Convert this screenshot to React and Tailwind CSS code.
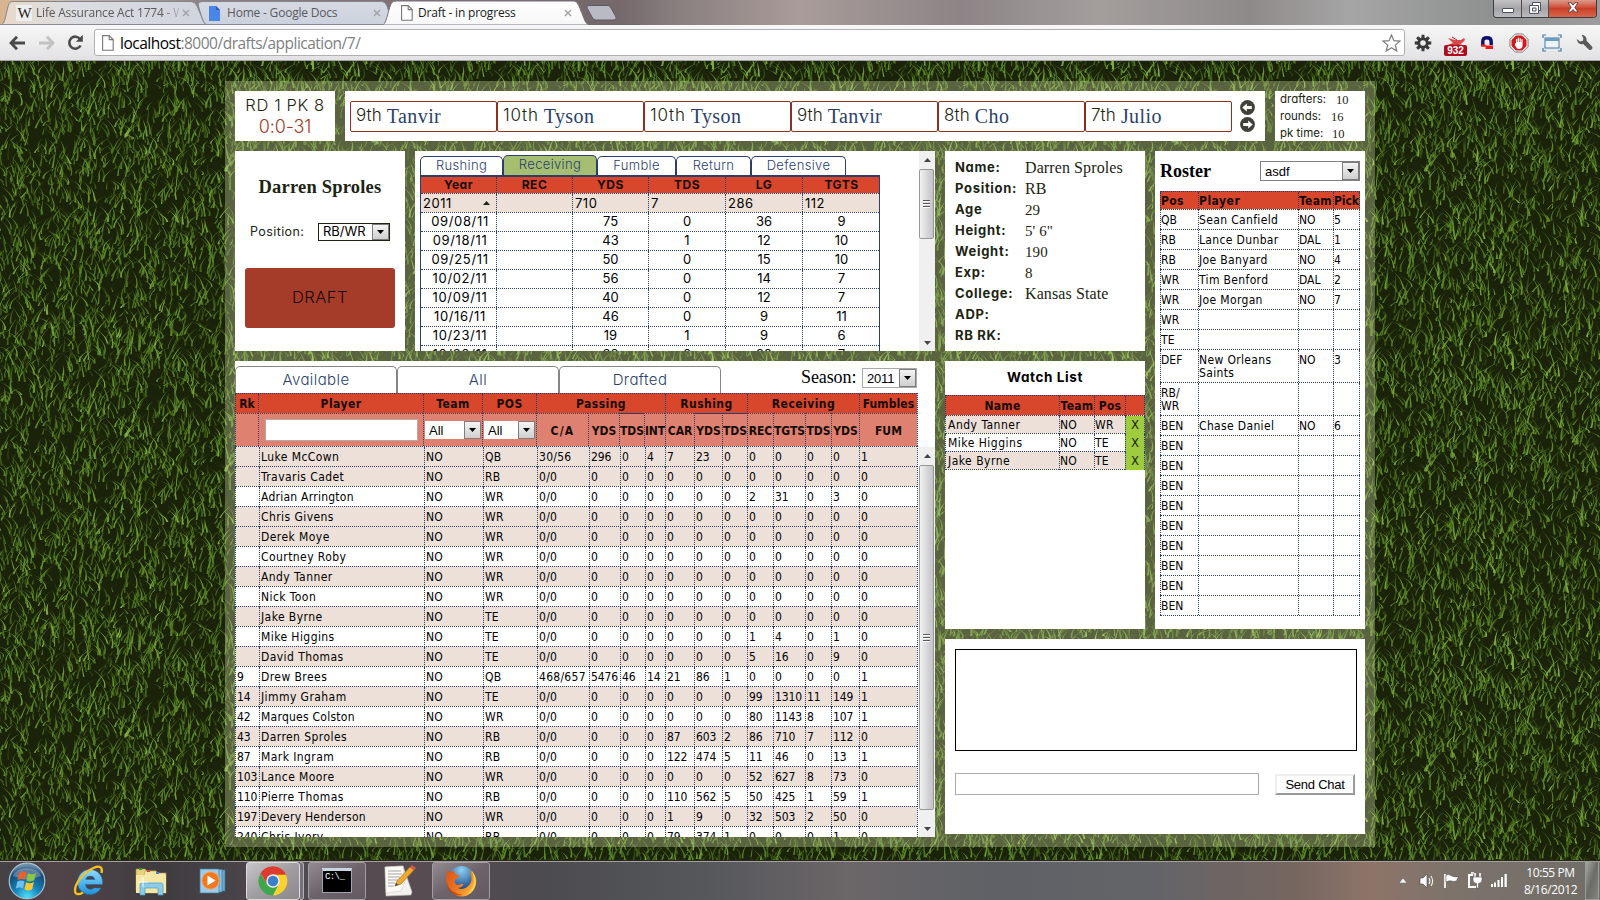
import React from "react";

const UI = "font-['DejaVu_Sans_Condensed','DejaVu_Sans',sans-serif] [font-stretch:condensed]";
const GEO = "font-['Inter',sans-serif] [font-feature-settings:'cv11']";
const SERIF = "font-['Liberation_Serif',serif]";
const SEGOE = "font-['Open_Sans','Noto_Sans',sans-serif]";
const LINE = "border-dotted border-[#2b3f6c]";

/* ---------- grass backdrop ---------- */
function makeBlades() {
  let s = 7;
  const rnd = () => {
    s = (s * 16807) % 2147483647;
    return s / 2147483647;
  };
  const colors = ["#2b400f", "#375312", "#446519", "#4f7721", "#5d8829", "#6d9a34", "#7fab42"];
  const W = 400;
  const H = 300;
  const N = 3700;
  const out = [];
  for (let i = 0; i < N; i++) {
    const x = rnd() * W;
    const y = rnd() * H;
    const a = (rnd() - 0.5) * 2;
    const lean = a * 13 + (rnd() - 0.5) * 3;
    const len = 5 + rnd() * 14;
    const bend = (rnd() - 0.5) * 6;
    const k = Math.min(6, Math.floor((i / N) * 3.800 + rnd() * 3));
    const w = 0.5 + rnd() * 0.6;
    const f = (n) => n.toFixed(1);
    for (const dx of [0, x < 24 ? W : x > W - 24 ? -W : null]) {
      if (dx === null) continue;
      for (const dy of [0, y < 24 ? H : null]) {
        if (dy === null) continue;
        const X = x + dx;
        const Y = y + dy;
        out.push(
          <path
            key={out.length}
            d={`M${f(X - w)} ${f(Y)}Q${f(X + bend)} ${f(Y - len / 2)} ${f(X + lean)} ${f(Y - len)}Q${f(X + bend + w * 1.4)} ${f(Y - len / 2)} ${f(X + w)} ${f(Y)}Z`}
            fill={colors[k]}
          />
        );
      }
    }
  }
  return out;
}
const BLADES = makeBlades();

function Grass() {
  return (
    <svg className="absolute inset-0 h-full w-full" aria-hidden="true">
      <defs>
        <pattern id="grass" width="400" height="300" patternUnits="userSpaceOnUse">
          <rect width="400" height="300" fill="#1a230a" />
          {BLADES}
        </pattern>
      </defs>
      <rect width="100%" height="100%" fill="url(#grass)" />
    </svg>
  );
}

/* ---------- browser chrome ---------- */
function PageIcon({ c = "#777" }) {
  return (
    <svg width="12" height="16" viewBox="0 0 12 16" className="shrink-0">
      <path d="M.6.6h6.6l4 4v10.6H.6z" fill="#fff" stroke={c} strokeWidth="1.1" />
      <path d="M7.2.6v4h4" fill="none" stroke={c} strokeWidth="1.1" />
    </svg>
  );
}
function TabClose({ c = "#a4a4a8" }) {
  return (
    <svg width="8" height="8" viewBox="0 0 8 8" className="shrink-0">
      <path d="M1 1l6 6M7 1L1 7" stroke={c} strokeWidth="1.5" />
    </svg>
  );
}
function BrowserTabs() {
  return (
    <div className="relative h-[25px] w-full bg-[linear-gradient(90deg,#d9b48e_0px,#c9bdb6_60px,#8f8386_200px,#7b6c70_450px,#74686b_620px,#8b8080_680px,#a99c9a_800px,#8c8486_960px,#a39e9c_1100px,#8e8a89_1250px,#a5a5a5_1350px,#8f9090_1490px,#9c9c9c_1600px)]">
      <svg className="absolute left-0 top-0" width="640" height="25" viewBox="0 0 640 25">
        <defs>
          <linearGradient id="tabA" x2="0" y2="1">
            <stop offset="0" stopColor="#d5d9e2" />
            <stop offset="1" stopColor="#ccd2dd" />
          </linearGradient>
          <linearGradient id="tabW" x1="0" x2="1" y2="0">
            <stop offset="0" stopColor="#e8d9ca" />
            <stop offset=".35" stopColor="#dcdde2" />
            <stop offset="1" stopColor="#d0d4dd" />
          </linearGradient>
          <linearGradient id="tabC" x2="0" y2="1">
            <stop offset="0" stopColor="#fff" />
            <stop offset="1" stopColor="#f7f7f7" />
          </linearGradient>
        </defs>
        <path d="M2 24.500C6 23 7 4 10 2.500Q11 1.500 13 1.500H191Q195 1.500 197 6L203 20Q204 24 207 24.500Z" fill="url(#tabW)" stroke="#85858c" />
        <path d="M206 24.500C203 24 199 8 198 4Q199 1.500 202 1.500H382Q385 1.500 387 6L393 24.500Z" fill="url(#tabA)" stroke="#85858c" />
        <path d="M383 25C387 23 389 5 392 2.500Q393 1 396 1H574Q577 1 579 6L585 21Q586 24 590 25Z" fill="url(#tabC)" stroke="#77737a" />
        <path d="M589 5.500H608Q610 5.500 611 8L616 17Q617 20 614 20H596Q593 20 592 17L587 8Q586 5.500 589 5.500Z" fill="#b9bac4" stroke="#5f5a60" />
        <rect x="0" y="24" width="384" height="1" fill="#8a8a90" />
        <rect x="588" y="24" width="52" height="1" fill="#6e6a6e" />
      </svg>
      <div className={`relative flex h-[25px] w-[585px] pt-[1px] text-[12px] tracking-[-0.2px] text-[#5a5a5c] ${SEGOE}`}>
        <div className="flex w-[200px] items-center pl-[16px]">
          <span className={`flex h-[16px] w-[16px] items-center justify-center bg-[#efeeee] text-[15px] tracking-[-1px] text-[#222] ${SERIF}`}>W</span>
          <span className="ml-[4px] w-[143px] whitespace-nowrap [mask-image:linear-gradient(90deg,#000_88%,transparent_104%)]">Life Assurance Act 1774 - W</span>
          <span className="ml-[3px]"><TabClose /></span>
        </div>
        <div className="flex w-[190px] items-center pl-[9px]">
          <svg width="11" height="15" viewBox="0 0 11 15"><path d="M0 0h7l4 4v11H0z" fill="#4a86e8" /><path d="M7 0v4h4z" fill="#2f5fb5" /></svg>
          <span className="ml-[7px] w-[146px]">Home - Google Docs</span>
          <TabClose />
        </div>
        <div className="flex items-center pl-[11px] text-[#1a1a1a]">
          <PageIcon />
          <span className="ml-[5px] w-[146px]">Draft - in progress</span>
          <TabClose />
        </div>
      </div>
      <div className="absolute right-[3px] top-0 flex h-[18px] w-[104px] overflow-hidden rounded-b-[4px] border border-t-0 border-[#3c3c40]">
        <div className="flex w-[28px] items-end justify-center border-r border-[#4c4c50] bg-gradient-to-b from-[#c4c4c6] via-[#a4a4a6] to-[#bcbcbe] pb-[4px]">
          <span className="h-[5px] w-[12px] rounded-[1px] border border-[#4c4f60] bg-white" />
        </div>
        <div className="flex w-[27px] items-center justify-center border-r border-[#4c4c50] bg-gradient-to-b from-[#c4c4c6] via-[#a4a4a6] to-[#bcbcbe] pb-[2px]">
          <svg width="12" height="12" viewBox="0 0 12 12"><path d="M3.500.5h8v8h-2v2.900H.6V3.500h2.900z" fill="#fff" stroke="#4c4f60" /><path d="M3.500 6h3.500v3H3.500zM3.500 3.500H9.500V8.500" fill="none" stroke="#4c4f60" /></svg>
        </div>
        <div className="flex flex-1 items-center justify-center bg-gradient-to-b from-[#dc9a8a] via-[#c9402a] to-[#d8654a] pb-[2px]">
          <svg width="12" height="11" viewBox="0 0 12 11"><path d="M1 .8h3L6 3.200 8 .8h3L7.800 5.400 11 10H8L6 7.500 4 10H1l3.200-4.600z" fill="#fff" stroke="#5c3c40" strokeWidth=".9" /></svg>
        </div>
      </div>
    </div>
  );
}
function gearPath() {
  let d = "";
  for (let i = 0; i < 8; i++) {
    const b = (i * Math.PI) / 4;
    [[-0.3, 5.600], [-0.17, 8.400], [0.17, 8.400], [0.3, 5.600]].forEach(([o, r], j) => {
      d += `${i || j ? "L" : "M"}${(9 + r * Math.sin(b + o)).toFixed(2)} ${(9 - r * Math.cos(b + o)).toFixed(2)}`;
    });
  }
  return d + "ZM9 6.200A2.800 2.800 0 1 0 9 11.800A2.800 2.800 0 1 0 9 6.200Z";
}
function Toolbar() {
  return (
    <div className="flex h-[36px] w-full items-center border-b border-[#a6a6a8] bg-gradient-to-b from-[#f7f7f7] to-[#e2e2e4] pl-[9px]">
      <svg width="17" height="16" viewBox="0 0 17 16"><path d="M8 1.800L2 8l6 6.200M2.500 8H16" fill="none" stroke="#4a4a4a" strokeWidth="2.800" /></svg>
      <svg className="ml-[12px]" width="17" height="16" viewBox="0 0 17 16"><path d="M9 1.800L15 8l-6 6.200M14.500 8H1" fill="none" stroke="#c2c2c2" strokeWidth="2.800" /></svg>
      <svg className="ml-[12px]" width="17" height="17" viewBox="0 0 17 17"><path d="M13.600 11.500a6 6 0 1 1-.4-6.300" fill="none" stroke="#4a4a4a" strokeWidth="2.600" /><path d="M15.800.8v7H8.800z" fill="#4a4a4a" /></svg>
      <div className="ml-[10px] flex h-[27px] w-[1311px] items-center rounded-[3px] border border-[#b0b0b2] bg-white pl-[7px]">
        <PageIcon />
        <span className={`ml-[6px] flex-1 text-[15.500px] leading-[20px] tracking-[-0.5px] text-[#808080] ${SEGOE}`}><span className="text-black">localhost</span>:8000/drafts/application/7/</span>
        <svg className="mr-[3px]" width="19" height="18" viewBox="0 0 19 18"><path d="M9.500 1l2.400 5.700 6.100.4-4.700 4 1.500 6-5.300-3.300-5.300 3.300 1.500-6-4.700-4 6.100-.4z" fill="#fff" stroke="#7c7c7c" strokeWidth="1.200" /></svg>
      </div>
      <svg className="ml-[9px]" width="18" height="18" viewBox="0 0 18 18"><path d={gearPath()} fill="#3a3a3a" fillRule="evenodd" /></svg>
      <div className="ml-[12px] mt-[7px] flex w-[23px] flex-col items-center">
        <svg width="20" height="10" viewBox="0 0 20 10"><path d="M1 9l6-2L2 2l7 2 6 0 3-2 1 2-3 3-5 3z" fill="#d94a4a" /><path d="M6 1l5 3M4 9h12" stroke="#b52a2a" /></svg>
        <span className="-mt-[1px] flex h-[11px] w-[23px] items-center justify-center rounded-[2px] bg-[#b00a1e] font-['Liberation_Sans',sans-serif] text-[10px] font-bold leading-none text-white">932</span>
      </div>
      <svg className="ml-[14px]" width="12" height="13" viewBox="0 0 12 13"><path d="M1.800 9V5.500Q1.800 1.800 6 1.800t4.200 3.700V9" fill="none" stroke="#10106c" strokeWidth="3.400" /><path d="M0 8.500h4.500v2.300H0zM4.500 9.500H12V13H4.500z" fill="#f01818" /></svg>
      <svg className="ml-[16px]" width="20" height="20" viewBox="0 0 20 20"><path d="M6.300 1h7.400L19 6.300v7.400L13.700 19H6.300L1 13.700V6.300z" fill="#fff" stroke="#777" /><path d="M6.900 2.500h6.200l4.400 4.400v6.200l-4.400 4.400H6.900l-4.400-4.400V6.900z" fill="#d9161b" /><path d="M6 10l1 .5V6h1.200v3h.6V4.800H10V9h.6V5.200h1.200V9h.6V6.300h1.200V12c0 3-1.600 4-3.600 4S7 14.500 6 12z" fill="#fff" /></svg>
      <svg className="ml-[13px]" width="20" height="18" viewBox="0 0 20 18"><path d="M1 4V1h3M16 1h3v3M19 14v3h-3M4 17H1v-3" fill="none" stroke="#3e79a8" strokeWidth="1.200" /><rect x="3" y="4" width="14" height="10" fill="#eef3f7" stroke="#3e79a8" /><rect x="3" y="4" width="14" height="3" fill="#6b9cc2" /></svg>
      <svg className="ml-[14px]" width="17" height="17" viewBox="0 0 17 17"><path d="M5.500.8a5 5 0 0 1 5 6l5.300 5.400a2.200 2.200 0 0 1-3 3.200L7.200 10a5 5 0 0 1-6.400-5L4 7.500 7 6.800 7.300 4z" fill="#5b5b5b" /></svg>
    </div>
  );
}

/* ---------- shared widgets ---------- */
function Select({ value, box, arrow, font }) {
  return (
    <div className={`flex items-center bg-white ${box}`}>
      <span className={`flex-1 whitespace-nowrap pl-[4px] text-black ${font}`}>{value}</span>
      <span className={`flex shrink-0 items-center justify-center border border-[#7d7d7d] bg-gradient-to-b from-[#f4f4f4] to-[#cfcfcf] ${arrow}`}>
        <svg width="7" height="4" viewBox="0 0 7 4"><path d="M0 0h7L3.500 4z" fill="#000" /></svg>
      </span>
    </div>
  );
}
function Scrollbar({ thumb, gap }) {
  return (
    <div className="flex w-[16px] shrink-0 flex-col bg-[#f0f0f0]">
      <div className={`flex w-full items-center justify-center ${gap}`}>
        <svg width="7" height="4" viewBox="0 0 7 4"><path d="M3.500 0L7 4H0z" fill="#444" /></svg>
      </div>
      <div className={`flex w-[15px] flex-col items-center justify-center gap-[1px] rounded-[2px] border border-[#979797] bg-gradient-to-r from-[#f3f3f3] via-[#d9d9db] to-[#c3c3c8] ${thumb}`}>
        <span className="h-[2px] w-[7px] border-t border-[#5a5a5a] bg-white" />
        <span className="h-[2px] w-[7px] border-t border-[#5a5a5a] bg-white" />
        <span className="h-[2px] w-[7px] border-t border-[#5a5a5a] bg-white" />
      </div>
      <div className="flex w-full flex-1 items-end justify-center pb-[6px]">
        <svg width="7" height="4" viewBox="0 0 7 4"><path d="M0 0h7L3.500 4z" fill="#444" /></svg>
      </div>
    </div>
  );
}

/* ---------- top row ---------- */
const PICKS = [["9th", "Tanvir"], ["10th", "Tyson"], ["10th", "Tyson"], ["9th", "Tanvir"], ["8th", "Cho"], ["7th", "Julio"]];

function CircleArrow({ flip }) {
  return (
    <svg width="15" height="15" viewBox="0 0 15 15" className={flip ? "rotate-180" : ""}>
      <circle cx="7.500" cy="7.500" r="7.400" fill="#41413a" />
      <path d="M2.300 7.500l4.500-4v2.400h5v3.200h-5v2.400z" fill="#fff" />
    </svg>
  );
}
function TopRow() {
  return (
    <div className="flex h-[50px] gap-[10px]">
      <div className={`flex w-[100px] flex-col items-center whitespace-nowrap bg-white pt-[4px] text-[16.500px] font-light leading-[21px] ${GEO}`}>
        <span className="tracking-[0.6px] text-[#1c2412]">RD 1 PK 8</span>
        <span className="text-[18px] tracking-[-0.1px] text-[#a43a28]">0:0-31</span>
      </div>
      <div className="flex w-[920px] items-center bg-white pl-[5px]">
        {PICKS.map(([n, who], i) => (
          <div key={i} className="flex h-[31px] w-[147px] items-center rounded-[2px] border border-[#8f2f20] pl-[5px]">
            <span className={`text-[17px] font-light text-[#1c2412] ${n.length > 3 ? "tracking-[0.8px]" : "tracking-[0.1px]"} ${GEO}`}>{n}</span>
            <span className={`ml-[5px] text-[20px] tracking-[0.4px] text-[#2b3f6c] ${SERIF}`}>{who}</span>
          </div>
        ))}
        <div className="ml-[8px] flex flex-col gap-[2px]">
          <CircleArrow />
          <CircleArrow flip />
        </div>
      </div>
      <div className={`w-[90px] bg-white pl-[5px] text-[11.500px] leading-[16px] text-[#1c2412] ${GEO}`}>
        <div className="flex"><span className="w-[56px]">drafters:</span><span className={`mt-[1px] text-[12.500px] ${SERIF}`}>10</span></div>
        <div className="flex"><span className="w-[51px]">rounds:</span><span className={`mt-[1px] text-[12.500px] ${SERIF}`}>16</span></div>
        <div className="flex"><span className="w-[52px]">pk time:</span><span className={`mt-[1px] text-[12.500px] ${SERIF}`}>10</span></div>
      </div>
    </div>
  );
}

/* ---------- selected player ---------- */
function PlayerCard() {
  return (
    <div className="flex w-[170px] flex-col items-center bg-white">
      <div className={`mt-[24px] whitespace-nowrap text-[18.500px] font-bold leading-[24px] tracking-[0.2px] text-[#1c2412] ${SERIF}`}>Darren Sproles</div>
      <div className={`mt-[24px] flex h-[18px] w-full items-center pl-[15px] text-[12.500px] tracking-[0.4px] text-[#1c2412] ${GEO}`}>
        <span className="w-[68px]">Position:</span>
        <Select value="RB/WR" box="h-[18px] w-[72px] border border-[#1c2412]" arrow="h-[16px] w-[17px]" font={`text-[13px] tracking-[0px] ${GEO}`} />
      </div>
      <div className={`mt-[27px] flex h-[60px] w-[150px] items-center justify-center rounded-[3px] bg-[#a53c2a] pb-[1px] text-[16.500px] font-light tracking-[0.5px] text-[#140a06] ${GEO}`}>DRAFT</div>
    </div>
  );
}

/* ---------- season stats ---------- */
const STAT_TABS = [["Rushing", "w-[83px]"], ["Receiving", "w-[94px]"], ["Fumble", "w-[79px]"], ["Return", "w-[75px]"], ["Defensive", "w-[95px]"]];
const GAMES = [
  ["09/08/11", "", "75", "0", "36", "9"],
  ["09/18/11", "", "43", "1", "12", "10"],
  ["09/25/11", "", "50", "0", "15", "10"],
  ["10/02/11", "", "56", "0", "14", "7"],
  ["10/09/11", "", "40", "0", "12", "7"],
  ["10/16/11", "", "46", "0", "9", "11"],
  ["10/23/11", "", "19", "1", "9", "6"],
  ["10/30/11", "", "38", "0", "20", "7"],
];
const STAT_GRID = "grid grid-cols-[76px_76px_76px_77px_77px_77px]";

function StatsPanel() {
  return (
    <div className={`flex w-[520px] overflow-hidden bg-white text-[13px] ${GEO}`}>
      <div className="w-[504px] pl-[5px] pt-[4px]">
        <div className="flex h-[20px] items-end">
          {STAT_TABS.map(([t, w], i) => (
            <div key={t} className={`flex items-center justify-center rounded-t-[5px] border border-b-0 border-[#2b3f6c] font-light tracking-[0.35px] text-[#2b3f6c] ${w} ${i === 1 ? "h-[20px] bg-[#a6be72] pb-[1px]" : "h-[19px] bg-white"}`}>{t}</div>
          ))}
        </div>
        <div className="w-[460px] border border-b-0 border-t-2 border-[#2b3f6c]">
          <div className={`h-[16px] bg-[#d8462c] text-[12px] font-bold leading-[15px] tracking-[0.5px] text-[#160c08] ${STAT_GRID}`}>
            {["Year", "REC", "YDS", "TDS", "LG", "TGTS"].map((h, i) => (
              <div key={h} className={`text-center ${i < 5 ? `border-r ${LINE}` : ""}`}>{h}</div>
            ))}
          </div>
          <div className={`h-[19px] border-t bg-[#ece0d8] leading-[17px] tracking-[0.5px] ${LINE} ${STAT_GRID}`}>
            {["2011", "", "710", "7", "286", "112"].map((h, i) => (
              <div key={i} className={`flex items-center justify-between pl-[2px] pr-[6px] ${i < 5 ? `border-r ${LINE}` : ""}`}>
                {h}
                {i === 0 && <svg width="7" height="4" viewBox="0 0 7 4"><path d="M3.500 0L7 4H0z" fill="#1c2412" /></svg>}
              </div>
            ))}
          </div>
          {GAMES.map((g) => (
            <div key={g[0]} className={`h-[19px] border-t leading-[17px] ${LINE} ${STAT_GRID}`}>
              {g.map((v, i) => (
                <div key={i} className={`text-center ${i === 0 ? "pl-[3px] tracking-[0.65px]" : ""} ${i < 5 ? `border-r ${LINE}` : ""}`}>{v}</div>
              ))}
            </div>
          ))}
        </div>
      </div>
      <Scrollbar gap="h-[18px]" thumb="h-[70px]" />
    </div>
  );
}

/* ---------- player info ---------- */
const INFO = [["Name:", "Darren Sproles"], ["Position:", "RB"], ["Age", "29"], ["Height:", "5' 6\""], ["Weight:", "190"], ["Exp:", "8"], ["College:", "Kansas State"], ["ADP:", ""], ["RB RK:", ""]];
function InfoPanel() {
  return (
    <div className="h-[200px] bg-white pl-[10px] pt-[6px] text-[#1c2412]">
      {INFO.map(([k, v]) => (
        <div key={k} className="flex h-[21px] items-center">
          <span className={`w-[70px] whitespace-nowrap text-[13px] font-bold tracking-[0.7px] ${GEO}`}>{k}</span>
          <span className={`whitespace-nowrap pt-[1px] ${/^\d/.test(v) ? "text-[15px]" : "text-[16px]"} tracking-[0.1px] ${SERIF}`}>{v}</span>
        </div>
      ))}
    </div>
  );
}

/* ---------- roster ---------- */
const ROSTER = [
  ["QB", "Sean Canfield", "NO", "5"], ["RB", "Lance Dunbar", "DAL", "1"], ["RB", "Joe Banyard", "NO", "4"], ["WR", "Tim Benford", "DAL", "2"], ["WR", "Joe Morgan", "NO", "7"],
  ["WR"], ["TE"], ["DEF", "New Orleans Saints", "NO", "3"], ["RB/ WR"], ["BEN", "Chase Daniel", "NO", "6"],
  ["BEN"], ["BEN"], ["BEN"], ["BEN"], ["BEN"], ["BEN"], ["BEN"], ["BEN"], ["BEN"],
];
const ROSTER_GRID = "grid grid-cols-[38px_100px_35px_27px]";
function RosterPanel() {
  return (
    <div className="w-[210px] bg-white pl-[5px] pt-[10px]">
      <div className="flex h-[20px] items-center">
        <span className={`w-[100px] text-[18px] font-bold text-black ${SERIF}`}>Roster</span>
        <Select value="asdf" box="h-[20px] w-[100px] border border-[#808080]" arrow="h-[18px] w-[17px]" font="pt-[1px] text-[13px] font-['Liberation_Sans',sans-serif]" />
      </div>
      <div className={`mt-[10px] w-[200px] border-b text-[12px] text-black ${LINE} ${UI}`}>
        <div className={`h-[18px] border-t bg-[#d8462c] font-bold leading-[18px] tracking-[0.3px] text-[#160c08] ${LINE} ${ROSTER_GRID}`}>
          {["Pos", "Player", "Team", "Pick"].map((h, i) => (
            <div key={h} className={`border-l ${LINE} ${i === 3 ? "border-r tracking-[-0.1px]" : i === 1 ? "tracking-[0.5px]" : ""}`}>{h}</div>
          ))}
        </div>
        {ROSTER.map((r, n) => (
          <div key={n} className={`border-t leading-[13px] ${LINE} ${ROSTER_GRID} ${n === 7 || n === 8 ? "h-[33px]" : "h-[20px]"}`}>
            {[0, 1, 2, 3].map((i) => (
              <div key={i} className={`border-l pt-[4px] ${i === 1 ? "pr-[14px] tracking-[0.35px]" : i === 0 ? "tracking-[0.05px]" : ""} ${LINE} ${i === 3 ? "border-r" : ""}`}>{r[i]}</div>
            ))}
          </div>
        ))}
      </div>
    </div>
  );
}

/* ---------- watch list ---------- */
const WATCH_GRID = "grid grid-cols-[114px_35px_31px_20px]";
function WatchPanel() {
  return (
    <div className="h-[268px] bg-white">
      <div className={`flex h-[34px] items-center justify-center pb-[1px] text-[13.500px] font-bold tracking-[0.6px] text-black ${GEO}`}>Watch List</div>
      <div className={`border-b text-[12px] text-black ${LINE} ${UI}`}>
        <div className={`h-[20px] border-t bg-[#d8462c] text-center font-bold leading-[20px] tracking-[0.3px] text-[#160c08] ${LINE} ${WATCH_GRID}`}>
          {["Name", "Team", "Pos", ""].map((h, i) => <div key={i} className={`border-l ${LINE} ${i === 3 ? "border-r" : ""}`}>{h}</div>)}
        </div>
        {[["Andy Tanner", "NO", "WR"], ["Mike Higgins", "NO", "TE"], ["Jake Byrne", "NO", "TE"]].map((r, n) => (
          <div key={n} className={`h-[18px] border-t leading-[18px] tracking-[0.2px] ${LINE} ${WATCH_GRID} ${n % 2 ? "bg-white" : "bg-[#ece0d8]"}`}>
            <div className={`border-l pl-[2px] tracking-[0.5px] ${LINE}`}>{r[0]}</div>
            <div className={`border-l ${LINE}`}>{r[1]}</div>
            <div className={`border-l ${LINE}`}>{r[2]}</div>
            <div className={`border-x bg-[#9fcc3f] text-center text-[13px] text-[#1c2412] ${LINE}`}>X</div>
          </div>
        ))}
      </div>
    </div>
  );
}

/* ---------- chat ---------- */
function ChatPanel() {
  return (
    <div className="h-[195px] bg-white pl-[10px] pt-[10px]">
      <div className="h-[102px] w-[402px] border border-black" />
      <div className="mt-[22px] flex items-center">
        <div className="h-[22px] w-[304px] border border-[#a9a9ac]" />
        <div className="ml-[16px] flex h-[21px] w-[80px] items-center justify-center border-2 border-b-[#9a9a9a] border-l-[#efefef] border-r-[#9a9a9a] border-t-[#efefef] bg-white pt-[1px] font-['Liberation_Sans',sans-serif] text-[13px] tracking-[-0.25px] text-black">Send Chat</div>
      </div>
    </div>
  );
}

/* ---------- player table ---------- */
const Z = "0/0 0 0 0 0 0 0";
const PLAYERS = [
  ["", "Luke McCown", "QB", "30/56 296 0 4 7 23 0 0 0 0 0 1", 1],
  ["", "Travaris Cadet", "RB", `${Z} 0 0 0 0 0`, 1],
  ["", "Adrian Arrington", "WR", `${Z} 2 31 0 3 0`, 0],
  ["", "Chris Givens", "WR", `${Z} 0 0 0 0 0`, 1],
  ["", "Derek Moye", "WR", `${Z} 0 0 0 0 0`, 1],
  ["", "Courtney Roby", "WR", `${Z} 0 0 0 0 0`, 0],
  ["", "Andy Tanner", "WR", `${Z} 0 0 0 0 0`, 1],
  ["", "Nick Toon", "WR", `${Z} 0 0 0 0 0`, 0],
  ["", "Jake Byrne", "TE", `${Z} 0 0 0 0 0`, 1],
  ["", "Mike Higgins", "TE", `${Z} 1 4 0 1 0`, 0],
  ["", "David Thomas", "TE", `${Z} 5 16 0 9 0`, 1],
  ["9", "Drew Brees", "QB", "468/657 5476 46 14 21 86 1 0 0 0 0 1", 0],
  ["14", "Jimmy Graham", "TE", `${Z} 99 1310 11 149 1`, 1],
  ["42", "Marques Colston", "WR", `${Z} 80 1143 8 107 1`, 0],
  ["43", "Darren Sproles", "RB", "0/0 0 0 0 87 603 2 86 710 7 112 0", 1],
  ["87", "Mark Ingram", "RB", "0/0 0 0 0 122 474 5 11 46 0 13 1", 0],
  ["103", "Lance Moore", "WR", `${Z} 52 627 8 73 0`, 1],
  ["110", "Pierre Thomas", "RB", "0/0 0 0 0 110 562 5 50 425 1 59 1", 0],
  ["197", "Devery Henderson", "WR", "0/0 0 0 0 1 9 0 32 503 2 50 0", 1],
  ["240", "Chris Ivory", "RB", "0/0 0 0 0 79 374 1 0 0 0 1 0", 0],
];
const SUB = ["C/A", "YDS", "TDS", "INT", "CAR", "YDS", "TDS", "REC", "TGTS", "TDS", "YDS", "FUM"];

function PlayerTable() {
  return (
    <div className={`flex h-[476px] flex-col overflow-hidden bg-white text-[12px] text-black ${UI}`}>
      <div className="flex h-[32px] items-end">
        {["Available", "All", "Drafted"].map((t) => (
          <div key={t} className={`flex h-[27px] w-[162px] items-center justify-center rounded-t-[5px] border border-b-0 border-[#858585] text-[15px] font-light tracking-[0.4px] text-[#2b3f6c] ${GEO}`}>{t}</div>
        ))}
        <div className={`ml-[80px] h-[30px] w-[61px] text-[18px] leading-[28px] tracking-[-0.1px] ${SERIF}`}>Season:</div>
        <div className="h-[25px]">
          <Select value="2011" box="h-[20px] w-[55px] border border-[#a9a9ac]" arrow="h-[18px] w-[17px]" font="pt-[1px] text-[13px] font-['Liberation_Sans',sans-serif] tracking-[-0.2px]" />
        </div>
      </div>
      <div className="w-[683px] border-r border-dotted border-[#2b3f6c] text-center font-bold tracking-[0.45px] text-[#160c08]">
        <div className={`grid h-[20px] grid-cols-[23px_165px_59px_54px_129px_82px_112px_58px] border-t bg-[#d8462c] leading-[20px] ${LINE}`}>
          {["Rk", "Player", "Team", "POS", "Passing", "Rushing", "Receiving", "Fumbles"].map((h) => (
            <div key={h} className={`border-l ${LINE} ${h === "Fumbles" || h === "Rk" ? "tracking-[0.1px]" : ""}`}>{h}</div>
          ))}
        </div>
        <div className="grid h-[33px] grid-cols-[23px_165px_59px_54px_52px_31px_25px_21px_29px_28px_25px_26px_32px_26px_28px_58px] bg-[#de8170] font-bold">
          <div className={`border-l border-t ${LINE}`} />
          <div className={`flex items-center justify-center border-l border-t pl-[1px] ${LINE}`}>
            <div className="mb-[1px] h-[22px] w-[153px] border border-[#b8a8a6] bg-white" />
          </div>
          <div className={`flex items-center border-l border-t pl-[1px] ${LINE}`}>
            <Select value="All" box="h-[18px] w-[56px]" arrow="h-[18px] w-[17px]" font="pt-[1px] text-left text-[13px] font-normal tracking-normal font-['Liberation_Sans',sans-serif]" />
          </div>
          <div className={`flex items-center border-l border-t pl-[1px] ${LINE}`}>
            <Select value="All" box="h-[18px] w-[51px]" arrow="h-[18px] w-[17px]" font="pt-[1px] text-left text-[13px] font-normal tracking-normal font-['Liberation_Sans',sans-serif]" />
          </div>
          {SUB.map((h, i) => (
            <div key={i} className={`flex items-center justify-center border-l border-t border-l-[#2b3f6c] border-t-[#2b3f6c] pt-[2px] [border-left-style:dotted] ${i === 2 || i === 5 || i === 6 ? "[border-top-style:solid]" : "[border-top-style:dotted]"} ${i === 0 ? "tracking-[1.2px]" : i === 11 ? "tracking-[0.1px]" : "tracking-[-0.1px]"}`}>
              <span className="whitespace-nowrap">{h}</span>
            </div>
          ))}
        </div>
      </div>
      <div className="flex h-[391px]">
        <div className="w-[683px] border-r border-dotted border-[#2b3f6c]">
          {PLAYERS.map(([rk, name, pos, stats, shade]) => (
            <div key={name} className={`grid h-[20px] grid-cols-[24px_165px_59px_54px_52px_31px_25px_20px_29px_28px_25px_26px_32px_26px_28px_58px] border-t leading-[20px] ${LINE} ${shade ? "bg-[#ece0d8]" : "bg-white"}`}>
              {[rk, name, "NO", pos, ...stats.split(" ")].map((v, i) => (
                <div key={i} className={`whitespace-nowrap border-l pl-[1px] ${i === 1 ? (v.length < 15 ? "tracking-[0.43px]" : "tracking-[0.25px]") : i > 0 && i < 5 ? "tracking-[0.28px]" : "tracking-[-0.15px]"} ${LINE}`}>{v}</div>
              ))}
            </div>
          ))}
        </div>
        <div className="ml-[1px] mt-[1px] flex">
          <Scrollbar gap="h-[18px]" thumb="h-[345px]" />
        </div>
      </div>
    </div>
  );
}

/* ---------- taskbar ---------- */
function Orb() {
  return (
    <svg width="38" height="38" viewBox="0 0 38 38">
      <defs>
        <radialGradient id="orb" cx=".5" cy=".95" r=".9">
          <stop offset="0" stopColor="#4fe0ff" /><stop offset=".4" stopColor="#1683b8" /><stop offset=".8" stopColor="#174a78" /><stop offset="1" stopColor="#6f93ad" />
        </radialGradient>
      </defs>
      <circle cx="19" cy="19" r="17.800" fill="url(#orb)" stroke="#a9bfcc" strokeWidth="1.200" />
      <path d="M5 14a15 12 0 0 1 28 0q-14 6-28 0z" fill="#fff" opacity=".28" />
      <path d="M11 11q4-2.500 7.500-.5l-1.600 7.300q-3.500-1.700-7.300.3z" fill="#e8622a" />
      <path d="M20 11.200q4 2.300 8-.3l-1.700 7.400q-3.600 2.200-7.900.2z" fill="#8cc541" />
      <path d="M9.300 19.600q3.700-2 7.200-.2L15 26.500q-3.500-1.900-7.200.2z" fill="#6fc0ee" />
      <path d="M18 20.200q4 2.200 7.900-.1l-1.700 7.200q-3.700 2.400-7.700 0z" fill="#fcc82e" />
    </svg>
  );
}
function IE() {
  return (
    <svg width="32" height="34" viewBox="0 0 32 34">
      <defs><linearGradient id="ie" x2="0" y2="1"><stop offset="0" stopColor="#8fdcff" /><stop offset="1" stopColor="#1e90dc" /></linearGradient></defs>
      <path d="M29.500 18.500A12.500 12.500 0 1 0 28 24h-7a5 5 0 0 1-8.500-3.500h17zM12.500 15.500a5 5 0 0 1 9.500 0z" fill="url(#ie)" fillRule="evenodd" stroke="#1c70b0" strokeWidth=".5" />
      <path d="M28.500 9C30 3.500 27 1.200 21 3.800 10 8.500 1.500 20 2 27c.4 4 4 4 8 1.500" fill="none" stroke="#f5c21d" strokeWidth="2.300" />
    </svg>
  );
}
function Folder() {
  return (
    <svg width="34" height="32" viewBox="0 0 34 32">
      <path d="M2 4h9l2 2h9v20H2z" fill="#e9d27c" stroke="#a98f3e" strokeWidth=".6" />
      <path d="M11 6h11l1 2h9v20H6z" fill="#f3e6a4" stroke="#b49b4a" strokeWidth=".6" />
      <path d="M2 10h30v18H2z" fill="#f5e7a6" />
      <rect x="5" y="3" width="3" height="2" fill="#3a9b43" /><rect x="13" y="5" width="3" height="2" fill="#d14b34" /><rect x="22" y="7" width="3" height="2" fill="#3f7fd0" />
      <path d="M6 30V20q0-2 2-2h19q2 0 2 2v10h-5v-7H11v7z" fill="#8ccbea" stroke="#4d9bc4" strokeWidth=".7" />
      <path d="M9 12v10M4 17h10" stroke="#fff" strokeWidth="1" opacity=".9" />
    </svg>
  );
}
function MediaPlayer() {
  return (
    <svg width="28" height="26" viewBox="0 0 28 26">
      <rect x="8" y="2" width="18" height="21" fill="#6aa8cf" stroke="#41789c" strokeWidth=".7" />
      <rect x="5" y="1.500" width="18" height="22.500" fill="#8cc3e2" stroke="#41789c" strokeWidth=".7" />
      <rect x="1" y="1" width="19" height="24" fill="#9fcbe6" stroke="#41789c" strokeWidth=".7" />
      <circle cx="11.500" cy="12.500" r="8.700" fill="#f0781e" stroke="#fbb07a" strokeWidth=".8" />
      <path d="M8.500 7.500l8 5-8 5z" fill="#fff" />
    </svg>
  );
}
function ChromeIcon() {
  return (
    <svg width="30" height="30" viewBox="0 0 30 30">
      <path d="M15 15L2.440 7.750A14.500 14.500 0 0 1 27.560 7.750z" fill="#dc3b2e" />
      <path d="M2.440 7.750A14.500 14.500 0 0 0 15 29.500L20.600 18.300 9.300 18.300z" fill="#40a64a" />
      <path d="M15 29.500A14.500 14.500 0 0 0 27.800 8.500H15l5.800 9.800z" fill="#fbd12b" />
      <path d="M2.800 7.300L9.400 18.300 15 8.500H28Q23 .5 15 .5 7 .5 2.800 7.300z" fill="#dc3b2e" />
      <circle cx="15" cy="15" r="6.700" fill="#f2f2f2" />
      <circle cx="15" cy="15" r="5.300" fill="#3b7fca" />
    </svg>
  );
}
function Notepad() {
  return (
    <svg width="32" height="32" viewBox="0 0 32 32">
      <path d="M1 2l18-1 9 26-1 3-25 1z" fill="#f3f2ee" stroke="#b9b7b0" strokeWidth=".6" />
      <path d="M1 2l18-1 2 16-4 9-15 2z" fill="#fbfaf7" stroke="#c4c2bc" strokeWidth=".5" />
      <path d="M4 6h13M4 9h14M4 12h12M4 15h10M4 18h7M4 21h6" stroke="#a5a5a5" strokeWidth="1" />
      <path d="M11 21l2-5L26 2l4 3-13 14z" fill="#f0a92e" stroke="#a0641a" strokeWidth=".6" />
      <path d="M26 2l2-2 4 3-2 2z" fill="#d65a4e" /><path d="M11 21l1-3 2.500 1.800z" fill="#444" />
    </svg>
  );
}
function Firefox() {
  return (
    <svg width="32" height="32" viewBox="0 0 32 32">
      <defs>
        <radialGradient id="ffb" cx=".5" cy=".15" r=".8"><stop offset="0" stopColor="#8fd0f2" /><stop offset="1" stopColor="#143f80" /></radialGradient>
        <linearGradient id="ffo" x1="0" x2="1" y2=".6"><stop offset="0" stopColor="#d9501c" /><stop offset=".6" stopColor="#ee7a22" /><stop offset="1" stopColor="#f9b53a" /></linearGradient>
      </defs>
      <circle cx="16.500" cy="14" r="13" fill="url(#ffb)" />
      <path d="M1.500 8Q2 5.500 3 5q.5 2.500 2 2.500 2.500-1.500 5-1.200-.5 2 .8 3 2 1 3.700 1.400-.4 1.800-3.800 3.300-2 2.500 0 5 2.300 1.800 4.500.3 2-1 3.300.2-1.500 3-5.500 3.500Q17 25.500 22 22t4.500-9Q26 8 24 5q6.500 4.500 7 12-.5 10-9 13.500-9 3-16-3.500Q-.5 19.500 1.500 8z" fill="url(#ffo)" />
      <path d="M26 5q6 6 5 13-1.500 9-10 12.500 7-6 8-13Q29 10 26 5z" fill="#fbd04c" />
      <path d="M2 17q1 6 6 9.500 5 3 10 3-7 3-13-3-3.500-4-3-9.500z" fill="#a93213" opacity=".6" />
    </svg>
  );
}
const BTN = "flex h-[38px] items-center justify-center rounded-[3px] border";

function Taskbar() {
  return (
    <div className="relative flex h-[40px] w-full border-t border-[#29271f] bg-[linear-gradient(90deg,#444044_0px,#514449_60px,#3f3c40_160px,#4f4a4f_300px,#584c52_420px,#4c4b4f_540px,#55575b_700px,#6b6668_850px,#5e6166_1000px,#636468_1150px,#75665f_1290px,#8d7468_1370px,#7d736b_1450px,#6f6e67_1600px)] shadow-[inset_0_1px_0_#a29f9d]">
      <div className="flex flex-1 items-center pl-[8px] pt-[1px]">
        <Orb />
        <span className="ml-[27px]"><IE /></span>
        <span className="ml-[29px]"><Folder /></span>
        <span className="ml-[31px]"><MediaPlayer /></span>
        <div className={`ml-[19px] w-[54px] border-[#dedbdd] bg-gradient-to-br from-[#c9c6c9] via-[#a19ea2] to-[#8b888c] ${BTN}`}><ChromeIcon /></div>
        <div className="h-[38px] w-[4px] rounded-r-[3px] border border-l-0 border-[#b5b1b4] bg-[#77727a]" />
        <div className={`ml-[4px] w-[58px] border-[#a29da1] bg-gradient-to-br from-[#938b91] via-[#6d646b] to-[#635a61] ${BTN}`}>
          <div className="mb-[2px] h-[25px] w-[30px] border border-t-[3px] border-[#9ba7b3] border-t-[#c7d6e2] bg-black pl-[2px] pt-[2px] font-['Liberation_Mono',monospace] text-[9px] leading-[8px] tracking-[-0.6px] text-white">C:\_</div>
        </div>
        <span className="ml-[18px]"><Notepad /></span>
        <div className={`ml-[16px] w-[58px] border-[#a29da1] bg-gradient-to-br from-[#938b91] via-[#6d646b] to-[#635a61] ${BTN}`}><Firefox /></div>
      </div>
      <div className="flex items-center">
        <svg width="8" height="5" viewBox="0 0 8 5"><path d="M4 0l4 5H0z" fill="#eef3f8" stroke="#444" strokeWidth=".4" /></svg>
        <svg className="ml-[12px]" width="17" height="16" viewBox="0 0 17 16"><path d="M1 5h3l4-4v14l-4-4H1z" fill="#fff" stroke="#444" strokeWidth=".6" /><path d="M10 5q1.800 3 0 6M12 3q3.200 5 0 10" fill="none" stroke="#f4f4f4" strokeWidth="1.100" /></svg>
        <svg className="ml-[7px]" width="17" height="16" viewBox="0 0 17 16"><path d="M2 1v14" stroke="#fff" strokeWidth="1.700" /><path d="M3 2q3-1 5 .5T16 4q-2 1-2.500 4-3 .8-5 0T3 9z" fill="#fff" stroke="#444" strokeWidth=".5" /></svg>
        <svg className="ml-[7px]" width="16" height="17" viewBox="0 0 16 17"><path d="M6 3H2v12h7" fill="none" stroke="#fff" strokeWidth="1.900" /><path d="M4 1h3M8 1v4M13 1v4" stroke="#fff" strokeWidth="1.600" /><path d="M6 5h9v3q0 3-3.500 3.500V16h-2v-4.500Q6 11 6 8z" fill="#fff" stroke="#444" strokeWidth=".5" /></svg>
        <svg className="ml-[8px]" width="16" height="13" viewBox="0 0 16 13"><path d="M0 10h2v3H0zM3 8.500h2V13H3zM6.500 6h2v7h-2zM10 3h2v10h-2zM13.500 0h2.300v13h-2.300z" fill="#fff" /></svg>
        <div className={`ml-[15px] w-[57px] text-center text-[12px] leading-[17px] tracking-[-0.4px] text-white ${SEGOE}`}>
          <div className="whitespace-nowrap">10:55 PM</div>
          <div className="whitespace-nowrap">8/16/2012</div>
        </div>
        <div className="ml-[6px] mr-[1px] h-[39px] w-[14px] border border-[#9b9b97] bg-gradient-to-br from-[#a5a5a1] via-[#6b6b67] to-[#85857f]" />
      </div>
    </div>
  );
}

export default function App() {
  return (
    <div className="flex h-[900px] w-[1600px] flex-col overflow-hidden bg-[#18220a]">
      <BrowserTabs />
      <Toolbar />
      <main className="relative h-[799px] w-full pt-[20px]">
        <Grass />
        <div className="relative mx-auto h-[766px] w-[1150px] bg-[rgba(240,250,190,0.3)] p-[10px]">
          <TopRow />
          <div className="mt-[10px] flex gap-[10px]">
            <div className="w-[700px]">
              <div className="flex h-[200px] gap-[10px]">
                <PlayerCard />
                <StatsPanel />
              </div>
              <div className="mt-[10px]"><PlayerTable /></div>
            </div>
            <div className="w-[420px]">
              <div className="flex h-[478px] gap-[10px]">
                <div className="flex w-[200px] flex-col gap-[10px]">
                  <InfoPanel />
                  <WatchPanel />
                </div>
                <RosterPanel />
              </div>
              <div className="mt-[10px]"><ChatPanel /></div>
            </div>
          </div>
        </div>
      </main>
      <Taskbar />
    </div>
  );
}
